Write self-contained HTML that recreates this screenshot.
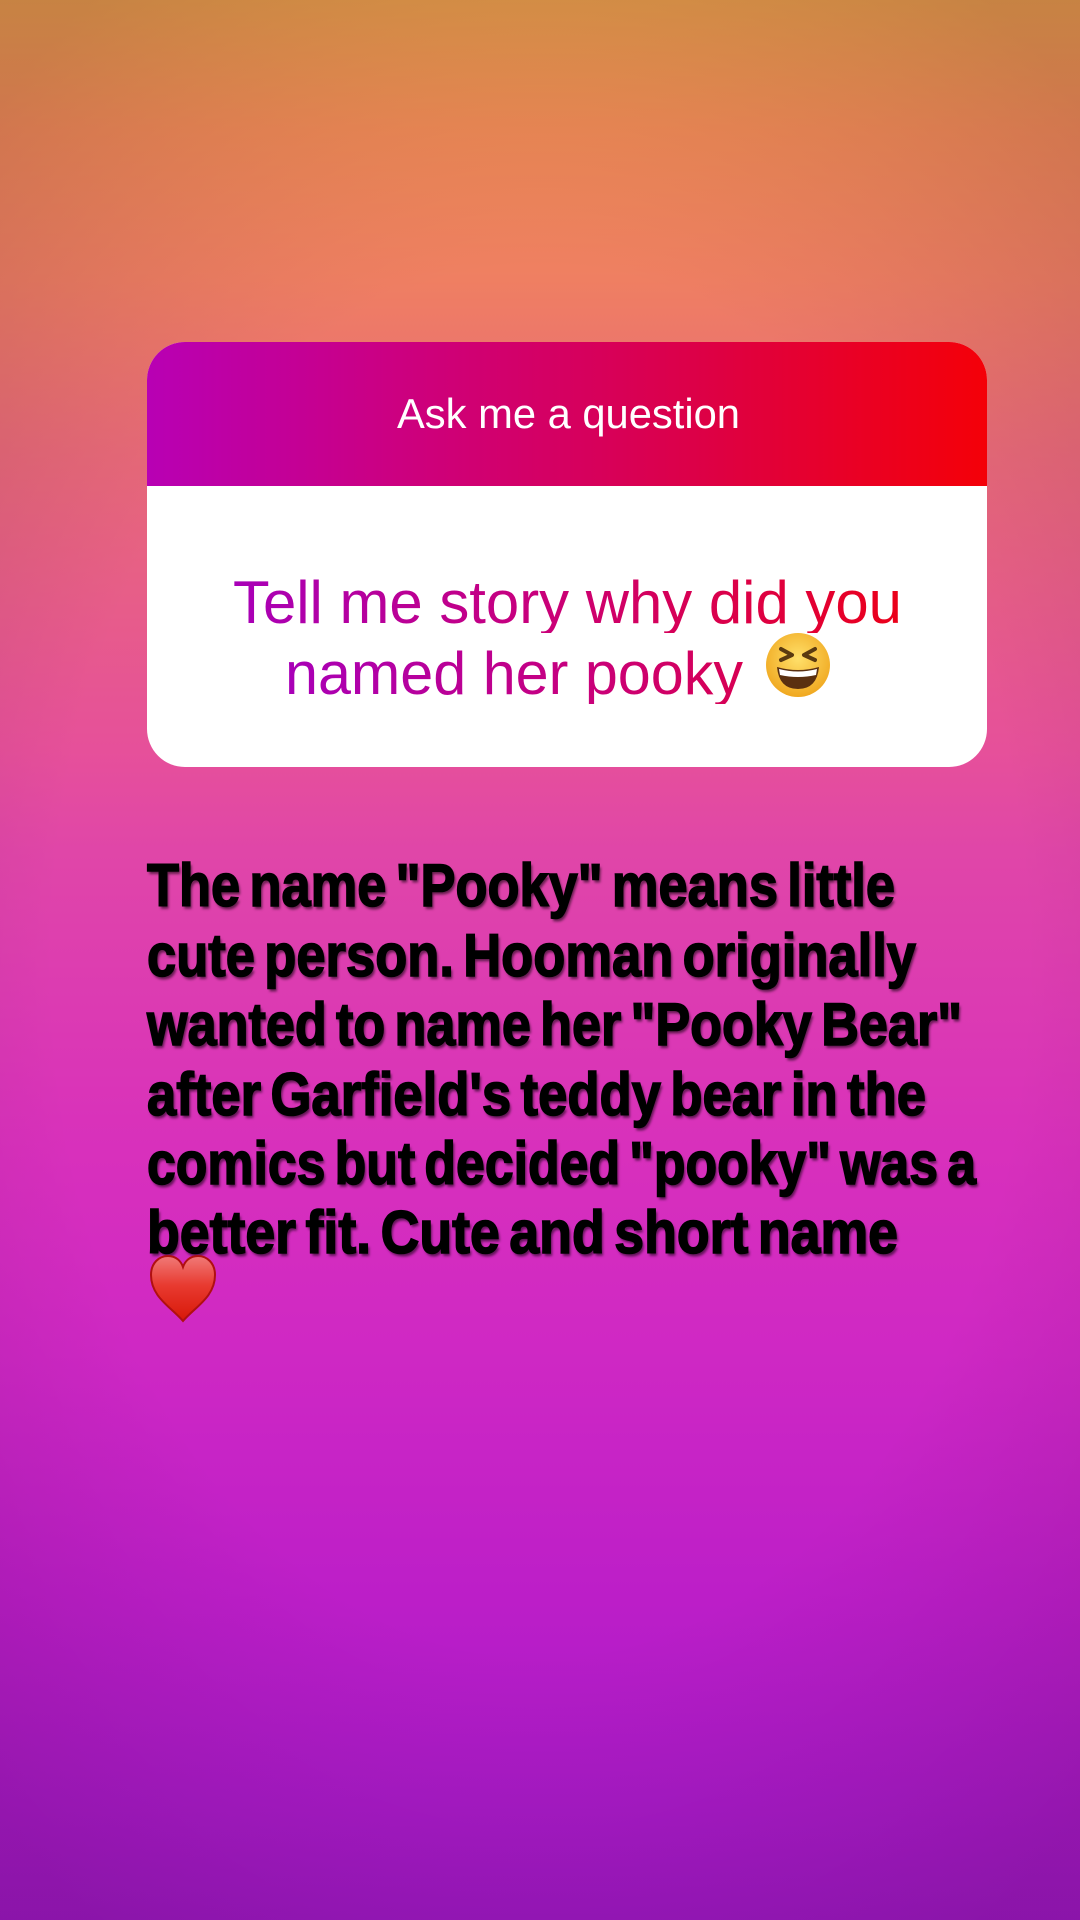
<!DOCTYPE html>
<html><head><meta charset="utf-8"><style>
html,body{margin:0;padding:0}
body{width:1080px;height:1920px;position:relative;overflow:hidden;
background:linear-gradient(180deg,#e39a48 0px,#ee8a55 130px,#ef7f62 280px,#e86a78 450px,#e6509a 750px,#e046a8 850px,#d830bc 1150px,#cf28c4 1350px,#bc1ec8 1600px,#a81ac6 1800px,#9c18c0 1920px);}
.vig{position:absolute;inset:0;background:radial-gradient(ellipse 75% 60% at 50% 50%,rgba(0,0,0,0) 60%,rgba(40,0,40,0.15) 100%)}
.card{position:absolute;left:147px;top:342px;width:840px;height:425px;border-radius:38px;background:#fff;overflow:hidden}
.head{position:absolute;left:0;top:0;width:100%;height:144px;background:linear-gradient(90deg,#b800b4 0%,#cc0080 30%,#dc0048 65%,#f40008 100%)}
.fit{position:absolute;white-space:nowrap;transform-origin:0 0}
.ask{color:#fff;font:42px/1 "Liberation Sans",sans-serif}
.q{font:60px/1 "Liberation Sans",sans-serif;background:linear-gradient(90deg,#a800b8 0px,#c8007c 300px,#e0003c 550px,#ee0010 700px);-webkit-background-clip:text;background-clip:text;color:transparent}
.b{font:bold 60px/1 "Liberation Sans",sans-serif;color:#000;-webkit-text-stroke:1.6px #000;word-spacing:-6px;text-shadow:2px 3px 3px rgba(0,0,0,0.55)}
</style></head><body>
<div class="vig"></div>
<div class="card"><div class="head"></div></div>
<div class="fit ask" style="left:397px;top:393px" id="a0">Ask me a question</div>
<div class="fit q" style="left:233px;top:573px" id="q1">Tell me story why did you</div>
<div class="fit q" style="left:285px;top:644px" id="q2">named her pooky</div>
<svg style="position:absolute;left:764px;top:631px" width="68" height="68" viewBox="0 0 68 68">
<defs><radialGradient id="f" cx="50%" cy="40%" r="60%"><stop offset="0" stop-color="#ffe06a"/><stop offset="1" stop-color="#f0a820"/></radialGradient></defs>
<circle cx="34" cy="34" r="32" fill="url(#f)"/>
<path d="M17 18 L28 24 L17 29 M51 18 L40 24 L51 29" stroke="#5a3a10" stroke-width="4" fill="none" stroke-linecap="round" stroke-linejoin="round"/>
<path d="M13 36 Q34 42 55 36 Q53 58 34 58 Q15 58 13 36Z" fill="#5a3010"/>
<path d="M15 38 Q34 43 53 38 L52 44 Q34 48 16 44Z" fill="#fff"/>
</svg>
<div class="fit b" style="left:147px;top:856px" id="b1">The name "Pooky" means little</div>
<div class="fit b" style="left:147px;top:926px" id="b2">cute person. Hooman originally</div>
<div class="fit b" style="left:147px;top:995px" id="b3">wanted to name her "Pooky Bear"</div>
<div class="fit b" style="left:147px;top:1065px" id="b4">after Garfield's teddy bear in the</div>
<div class="fit b" style="left:147px;top:1134px" id="b5">comics but decided "pooky" was a</div>
<div class="fit b" style="left:147px;top:1203px" id="b6">better fit. Cute and short name</div>
<svg style="position:absolute;left:149px;top:1255px" width="68" height="68" viewBox="0 0 68 68">
<defs><linearGradient id="h" x1="0" y1="0" x2="0" y2="1"><stop offset="0" stop-color="#f07a78"/><stop offset="0.45" stop-color="#e83a30"/><stop offset="1" stop-color="#d81808"/></linearGradient></defs>
<path d="M34 66 C22 52 2 42 2 20 C2 8 10 1 19 1 C27 1 32 6 34 12 C36 6 41 1 49 1 C58 1 66 8 66 20 C66 42 46 52 34 66Z" fill="url(#h)" stroke="#b01010" stroke-width="2"/>
</svg>
<script>
var t={a0:343,q1:669,q2:458,b1:748,b2:769,b3:815,b4:779,b5:829,b6:751};
for(var k in t){var e=document.getElementById(k);var w=e.getBoundingClientRect().width;e.style.transform="scaleX("+(t[k]/w)+")";}
</script>
</body></html>
